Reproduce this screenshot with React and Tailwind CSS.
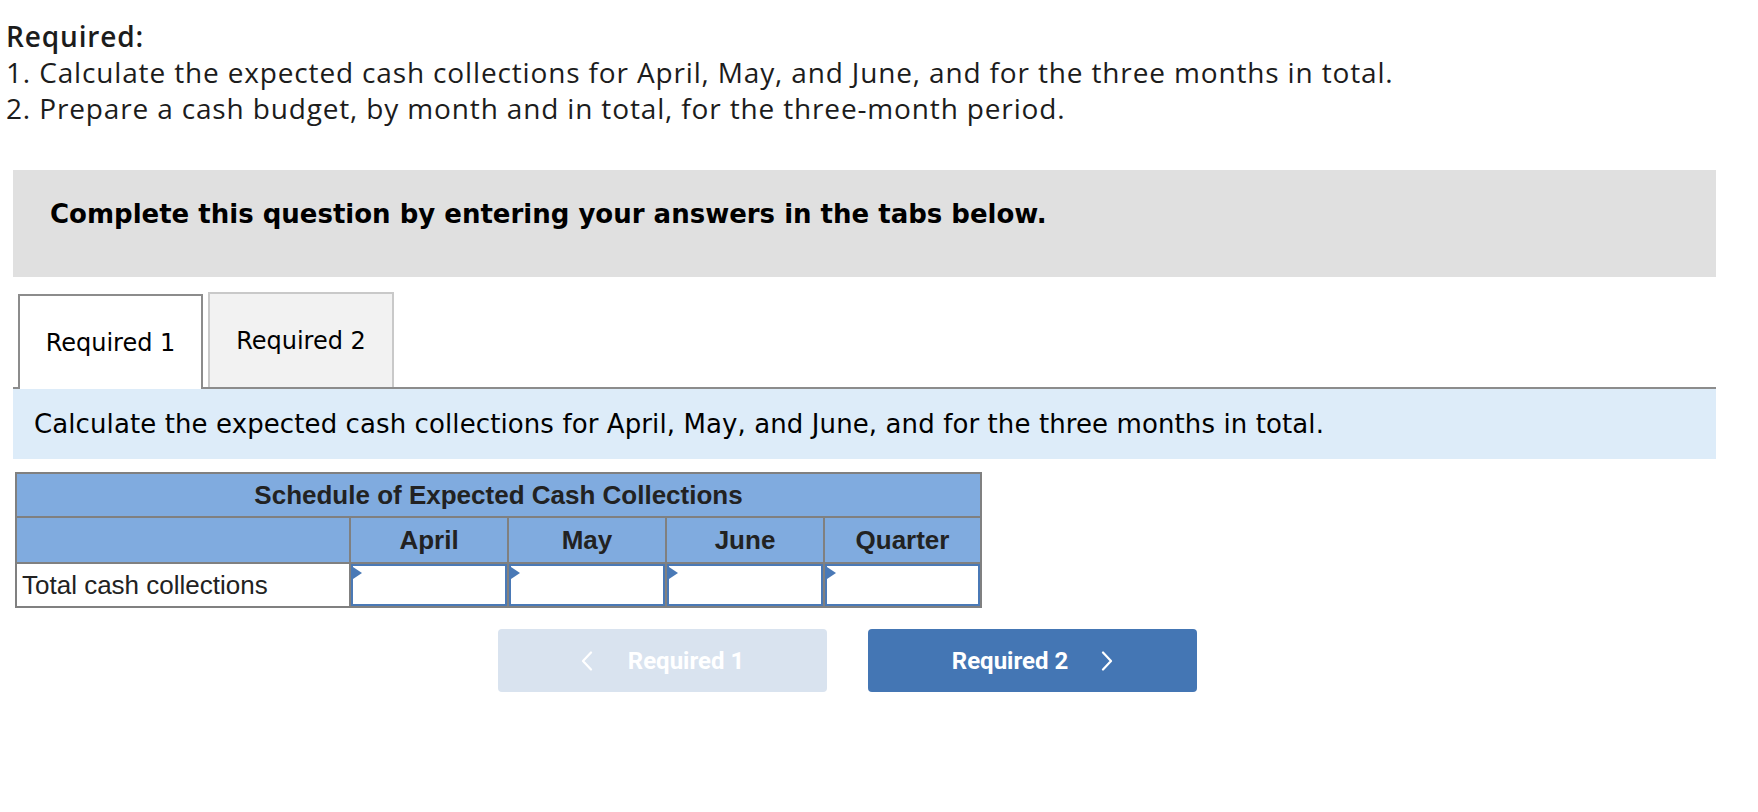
import React from 'react';

const months = ['April', 'May', 'June', 'Quarter'];

const Chevron = ({ dir, className }) => (
  <svg className={className} width="12" height="20" viewBox="0 0 12 20" fill="none" stroke="currentColor" strokeWidth="2.2" strokeLinecap="round" strokeLinejoin="round">
    {dir === 'left' ? <path d="M10 1.5 2 10l8 8.5" /> : <path d="M2 1.5 10 10l-8 8.5" />}
  </svg>
);

const InputCell = () => (
  <div className="relative bg-white border-2 border-[#4a79b6] h-full">
    <span className="absolute left-0 top-[1px] w-0 h-0 border-y-[6px] border-y-transparent border-l-[9px] border-l-[#4a79b6]" />
  </div>
);

const App = () => {
  return (
    <div className="min-h-screen bg-white text-[#1c1c1c] pt-[18px]">
      <div className="pl-[6px] font-['Open_Sans','Liberation_Sans',sans-serif] text-[28px] leading-[36px] tracking-[0.85px]">
        <div className="font-semibold">Required:</div>
        <div>1. Calculate the expected cash collections for April, May, and June, and for the three months in total.</div>
        <div>2. Prepare a cash budget, by month and in total, for the three-month period.</div>
      </div>

      <div className="ml-[13px] w-[1703px] mt-[44px]">
        <div className="h-[107px] bg-[#e0e0e0] pt-[29px] pl-[37px] font-['DejaVu_Sans','Verdana',sans-serif] font-bold text-[26px] leading-[30px] text-black">
          Complete this question by entering your answers in the tabs below.
        </div>

        <div className="mt-[15px] flex items-end gap-[5px] pl-[5px] border-b-2 border-[#8c8c8c] font-['DejaVu_Sans','Verdana',sans-serif] text-[24px] text-black">
          <div className="w-[185px] h-[95px] -mb-[2px] bg-white border-2 border-b-0 border-[#8c8c8c] flex items-center justify-center">
            Required 1
          </div>
          <div className="w-[186px] h-[95px] bg-[#f2f2f2] border-2 border-b-0 border-[#c9c9c9] flex items-center justify-center">
            Required 2
          </div>
        </div>

        <div className="h-[70px] bg-[#ddecf9] flex items-center pl-[21px] font-['DejaVu_Sans','Verdana',sans-serif] text-[26px] tracking-[0.1px] text-black">
          Calculate the expected cash collections for April, May, and June, and for the three months in total.
        </div>
      </div>

      <div className="ml-[15px] mt-[13px] w-[967px] bg-[#808080] p-[2px] grid grid-cols-[332px_156px_156px_156px_155px] gap-[2px] font-['Liberation_Sans','Arial',sans-serif] text-[26px] text-[#222]">
        <div className="col-span-5 h-[42px] bg-[#80abdf] flex items-center justify-center font-bold">
          Schedule of Expected Cash Collections
        </div>
        <div className="h-[44px] bg-[#80abdf]" />
        {months.map((m) => (
          <div key={m} className="h-[44px] bg-[#80abdf] flex items-center justify-center font-bold">
            {m}
          </div>
        ))}
        <div className="h-[42px] bg-white flex items-center pl-[5px]">Total cash collections</div>
        {months.map((m) => (
          <InputCell key={m} />
        ))}
      </div>

      <div className="mt-[21px] pl-[498px] flex gap-[41px] font-['Roboto','Liberation_Sans',sans-serif] font-bold text-[24px] text-white">
        <button className="w-[329px] h-[63px] rounded-[4px] bg-[#d9e3ef] flex items-center justify-center gap-[35px]">
          <Chevron dir="left" />
          <span>Required 1</span>
        </button>
        <button className="w-[329px] h-[63px] rounded-[4px] bg-[#4476b4] flex items-center justify-center gap-[33px]">
          <span>Required 2</span>
          <Chevron dir="right" />
        </button>
      </div>
    </div>
  );
};

export default App;
